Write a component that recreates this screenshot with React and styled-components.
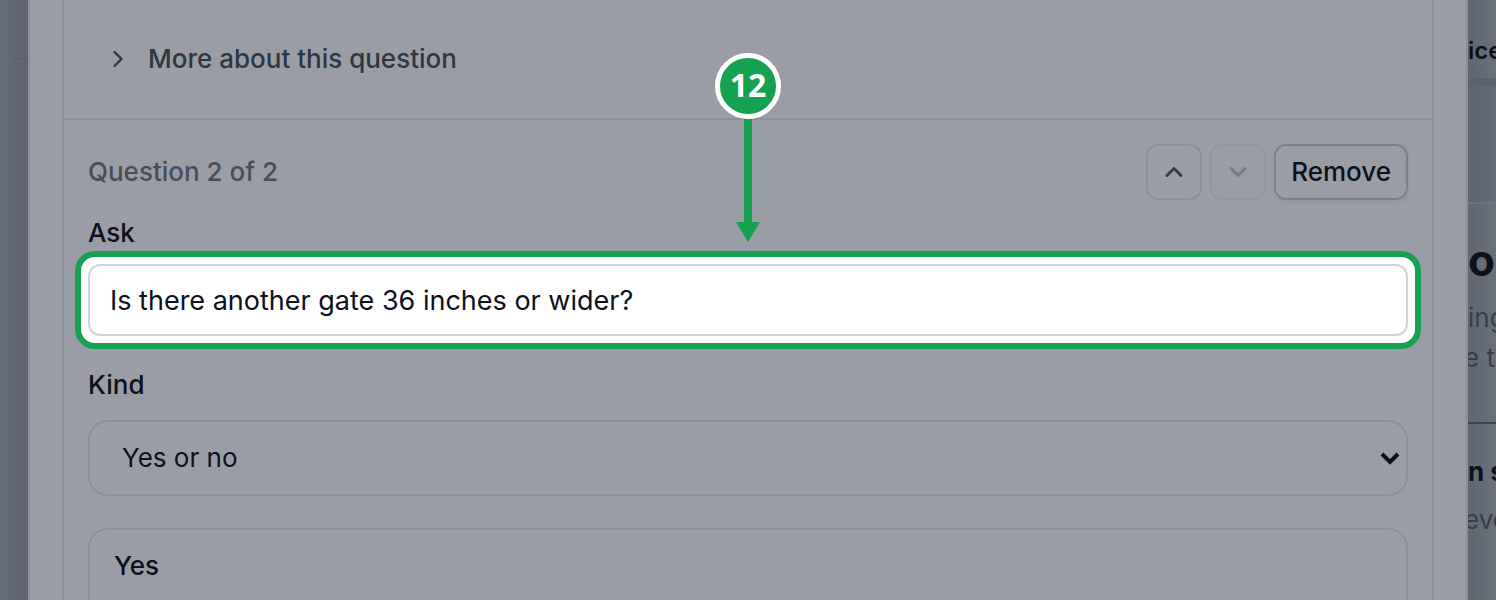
// src/screens/QuestionEditor.jsx
import React, { useState } from 'react';
import styled, { createGlobalStyle } from 'styled-components';
import { ChevronDown, ChevronRight, ChevronUp } from 'lucide-react';

export default function QuestionEditor() {
  const [ask, setAsk]   = useState('Is there another gate 36 inches or wider?');
  const [kind, setKind] = useState('yesno');

  return (
    <>
      <GlobalStyle />
      <Page>
        <LeftBackdrop />
        <Dialog role="dialog" aria-label="Questions">
          <Panel>
            <MoreSection>
              <MoreButton type="button">
                <ChevronRight size={28} />
                More about this question
              </MoreButton>
            </MoreSection>

            <Question>
              <QuestionHeader>
                <Counter>Question 2 of 2</Counter>
                <Actions>
                  <IconButton type="button" aria-label="Move up">
                    <ChevronUp size={28} strokeWidth={2.5} />
                  </IconButton>
                  <IconButton type="button" aria-label="Move down" disabled>
                    <ChevronDown size={28} strokeWidth={2.5} />
                  </IconButton>
                  <RemoveButton type="button">Remove</RemoveButton>
                </Actions>
              </QuestionHeader>

              <Label htmlFor="ask">Ask</Label>
              <Highlight>
                <TextInput id="ask" value={ask} onChange={(e) => setAsk(e.target.value)} />
                <Callout>
                  <Badge>12</Badge>
                  <Stem />
                  <ArrowHead viewBox="0 0 24 20">
                    <path d="M0 0H24L12 20Z" />
                  </ArrowHead>
                </Callout>
              </Highlight>

              <KindLabel htmlFor="kind">Kind</KindLabel>
              <SelectWrap>
                <Select id="kind" value={kind} onChange={(e) => setKind(e.target.value)}>
                  <option value="yesno">Yes or no</option>
                </Select>
                <SelectArrow viewBox="0 0 20 14">
                  <path d="M2 3L10 11L18 3" />
                </SelectArrow>
              </SelectWrap>

              <AnswerCard>Yes</AnswerCard>
            </Question>
          </Panel>
        </Dialog>

        <RightBackdrop>
          <TopBar>ice</TopBar>
          <Banner />
          <Intro>
            <Heading>o</Heading>
            <Muted>ing</Muted>
            <Muted $tucked>e th</Muted>
          </Intro>
          <Details>
            <SubHeading>n s</SubHeading>
            <Muted $tucked>eve</Muted>
          </Details>
        </RightBackdrop>
      </Page>
    </>
  );
}

// Styled Components
const GlobalStyle = createGlobalStyle`
  * {
    box-sizing: border-box;
  }
  body {
    margin: 0;
    overflow: hidden;
    background: #686e79;
    color: #0c111c;
    font-family: Inter, "Liberation Sans", sans-serif;
    font-size: 26px;
    line-height: 40px;
  }
  button, input, select {
    font: inherit;
    color: inherit;
    margin: 0;
  }
`;

const Page = styled.div`
  display: grid;
  grid-template-columns: 28px minmax(0, 1fr) 28px;
  height: 100vh;
  overflow: hidden;
`;

const LeftBackdrop = styled.div`
  background: linear-gradient(to right, #686e79, #5e646f);

  &::before {
    content: '';
    display: block;
    height: 58px;
    margin-left: 12px;
    border-bottom: 2px solid #5d636e;
  }
`;

const Dialog = styled.main`
  height: max-content;
  min-height: 100vh;
  padding: 0 32px;
  background: #9a9da6;
  border: solid #898f98;
  border-width: 0 2px;
`;

const Panel = styled.div`
  border: solid #8a9098;
  border-width: 0 2px;
`;

const MoreSection = styled.section`
  padding: 39px 40px;
  border-bottom: 2px solid #8a9098;
`;

const MoreButton = styled.button`
  display: flex;
  align-items: center;
  gap: 16px;
  padding: 0;
  border: 0;
  background: none;
  color: #2f3643;
  font-weight: 500;
`;

const Question = styled.section`
  padding: 24px;
`;

const QuestionHeader = styled.div`
  display: flex;
  align-items: center;
  justify-content: space-between;
`;

const Counter = styled.span`
  color: #474e5a;
  font-weight: 500;
`;

const Actions = styled.div`
  display: flex;
  gap: 8px;
`;

const IconButton = styled.button`
  display: flex;
  align-items: center;
  justify-content: center;
  width: 56px;
  height: 56px;
  padding: 0;
  border: 2px solid #8a9098;
  border-radius: 12px;
  background: none;
  color: #343b48;

  &:disabled {
    border-color: #92969f;
    color: #757b86;
  }
`;

const RemoveButton = styled.button`
  height: 56px;
  padding: 0 15px;
  border: 2px solid #7c828d;
  border-radius: 12px;
  background: none;
  box-shadow: 0 2px 4px rgba(15, 23, 42, 0.08);
  font-weight: 500;
`;

const Label = styled.label`
  display: block;
  width: max-content;
  padding: 13px 0 11px;
  font-weight: 500;
`;

const KindLabel = styled(Label)`
  padding: 29px 0 15px;
`;

// ring and white gap around the field being pointed at
const Highlight = styled.div`
  position: relative;

  &::before {
    content: '';
    position: absolute;
    inset: -13px;
    border: 6px solid #15a150;
    border-radius: 20px;
    background: #fff;
  }
`;

const TextInput = styled.input`
  position: relative;
  display: block;
  width: 100%;
  height: 72px;
  padding: 0 20px;
  border: 2px solid #d0d2d6;
  border-radius: 12px;
  background: #fff;
  outline: none;
  font-size: 27px;
`;

const Callout = styled.div`
  position: absolute;
  left: 0;
  right: 0;
  bottom: calc(100% + 22px);
  display: flex;
  flex-direction: column;
  align-items: center;
  pointer-events: none;
`;

const Badge = styled.span`
  display: flex;
  align-items: center;
  justify-content: center;
  width: 66px;
  height: 66px;
  padding-bottom: 2px;
  border: 5px solid #fff;
  border-radius: 50%;
  background: #15a150;
  color: #fff;
  font-family: "Open Sans", "Noto Sans", sans-serif;
  font-size: 32px;
  font-weight: 700;
`;

const Stem = styled.span`
  width: 8px;
  height: 103px;
  background: #15a150;
`;

const ArrowHead = styled.svg`
  width: 24px;
  height: 20px;
  fill: #15a150;
`;

const SelectWrap = styled.div`
  position: relative;
`;

const Select = styled.select`
  display: block;
  width: 100%;
  height: 76px;
  padding: 0 32px;
  border: 2px solid #8a9098;
  border-radius: 20px;
  background: none;
  appearance: none;
`;

const SelectArrow = styled.svg`
  position: absolute;
  right: 8px;
  top: 31px;
  width: 20px;
  height: 14px;
  fill: none;
  stroke: #0c111c;
  stroke-width: 4;
  pointer-events: none;
`;

const AnswerCard = styled.div`
  margin-top: 32px;
  padding: 16px 24px 40px;
  border: 2px solid #8a9098;
  border-radius: 20px;
  font-weight: 500;
`;

const RightBackdrop = styled.aside`
  overflow: hidden;
  white-space: nowrap;
  background: linear-gradient(to right, #616772, #6b717b);
`;

const TopBar = styled.div`
  padding: 31px 0 7px;
  border-bottom: 8px solid #5d636e;
  font-size: 24px;
  font-weight: 600;
`;

const Banner = styled.div`
  height: 116px;
  background: rgba(70, 80, 96, 0.12);
`;

const Intro = styled.div`
  padding: 36px 0 44px;
  border-top: 2px solid #6d737d;
  border-bottom: 2px solid #3e4551;
`;

const Heading = styled.div`
  margin-bottom: 18px;
  font-size: 44px;
  font-weight: 700;
`;

// $tucked lines run on from under the dialog edge
const Muted = styled.div`
  margin-left: ${({ $tucked }) => ($tucked ? '-4px' : '0')};
  color: #373e4a;
`;

const Details = styled.div`
  padding-top: 28px;
`;

const SubHeading = styled.div`
  margin-bottom: 8px;
  font-weight: 700;
`;
